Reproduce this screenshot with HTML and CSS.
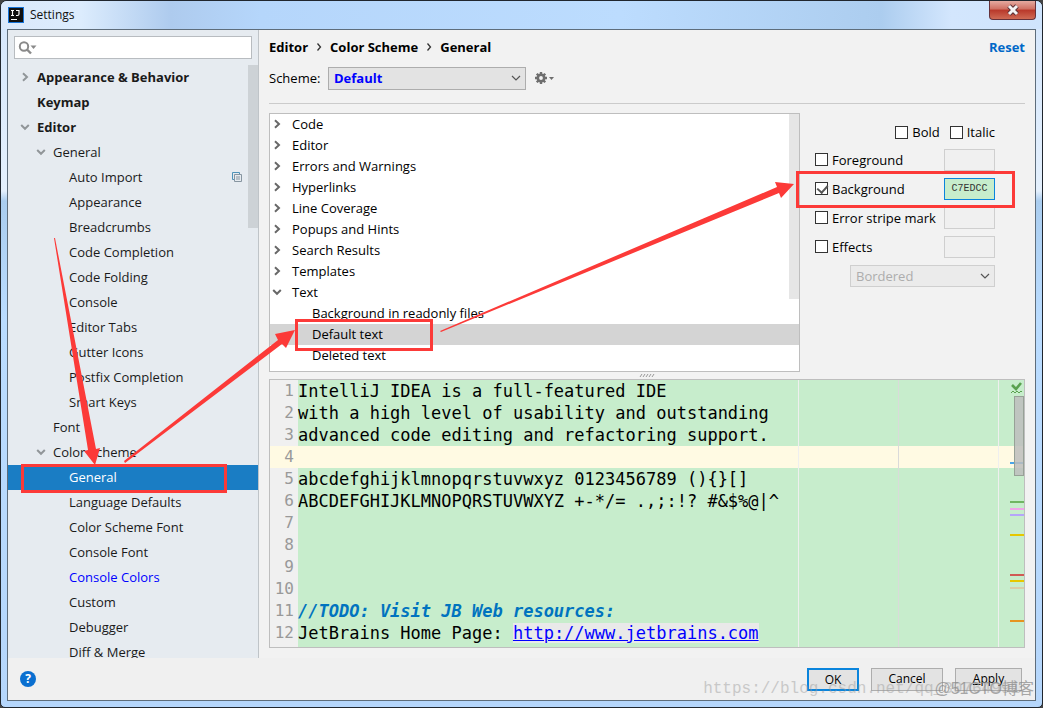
FILE: index.html
```html
<!DOCTYPE html>
<html lang="en">
<head>
<meta charset="utf-8">
<title>Settings</title>
<link rel="stylesheet" href="styles.css">
</head>
<body>
<svg class="defs" width="0" height="0" aria-hidden="true">
  <symbol id="right" viewBox="0 0 10 10"><path d="M3 1.2 7 5 3 8.8" fill="none" stroke="currentColor" stroke-width="2"/></symbol>
  <symbol id="down" viewBox="0 0 10 10"><path d="M1.2 3 5 6.8 8.8 3" fill="none" stroke="currentColor" stroke-width="2"/></symbol>
</svg>
<div class="window">
  <header class="titlebar">
    <svg class="logo" viewBox="0 0 16 16" aria-hidden="true"><rect x=".5" y=".5" width="15" height="15" fill="#111" stroke="#1674d9"/><path d="M3 3.5h3M4.500 3.500v5M3 8.500h3M8 3.500h3v3.500q0 1.500-1.500 1.500H8M3 12.500h6" fill="none" stroke="#fff" stroke-width="1.200"/></svg>
    <h1>Settings</h1>
    <button class="close" aria-label="Close"><svg viewBox="0 0 14 12"><path d="M3 2 11 10M11 2 3 10" stroke="#5b3136" stroke-width="5"/><path d="M3 2 11 10M11 2 3 10" stroke="#f4f4f4" stroke-width="3"/></svg></button>
  </header>
  <div class="client">
    <div class="body">
      <aside class="sidebar">
        <label class="search">
          <svg viewBox="0 0 20 14" aria-hidden="true"><circle cx="6" cy="5.5" r="4.2" fill="none" stroke="#8a8a8a" stroke-width="2"/><path d="m9 8.500 4 4" stroke="#8a8a8a" stroke-width="2.400"/><path d="M12.500 4.500h6l-3 3.500z" fill="#8a8a8a"/></svg>
          <input type="text" aria-label="Search settings">
        </label>
        <nav class="tree">
          <ul>
            <li class="top"><svg class="chev"><use href="#right"/></svg>Appearance &amp; Behavior</li>
            <li class="top"><span class="chev"></span>Keymap</li>
            <li class="top"><svg class="chev"><use href="#down"/></svg>Editor</li>
            <li class="mid"><svg class="chev"><use href="#down"/></svg>General</li>
            <li class="leaf">Auto Import<svg class="copy" viewBox="0 0 10 10"><path d="M2.500 7.500h-2v-7h7v2" fill="none" stroke="#4f93b8"/><path d="M2.500 2.500h7v7h-7zM4 5h4M4 7h4" fill="none" stroke="#8795a0"/></svg></li>
            <li class="leaf">Appearance</li>
            <li class="leaf">Breadcrumbs</li>
            <li class="leaf">Code Completion</li>
            <li class="leaf">Code Folding</li>
            <li class="leaf">Console</li>
            <li class="leaf">Editor Tabs</li>
            <li class="leaf">Gutter Icons</li>
            <li class="leaf">Postfix Completion</li>
            <li class="leaf">Smart Keys</li>
            <li class="mid"><span class="chev"></span>Font</li>
            <li class="mid"><svg class="chev"><use href="#down"/></svg>Color Scheme</li>
            <li class="leaf selected">General</li>
            <li class="leaf">Language Defaults</li>
            <li class="leaf">Color Scheme Font</li>
            <li class="leaf">Console Font</li>
            <li class="leaf changed">Console Colors</li>
            <li class="leaf">Custom</li>
            <li class="leaf">Debugger</li>
            <li class="leaf">Diff &amp; Merge</li>
          </ul>
          <div class="tree-thumb"></div>
        </nav>
      </aside>
      <main class="main">
        <div class="crumbs">
          <span>Editor</span><svg viewBox="0 0 6 10"><path d="m1.500 1.500 3 3.500-3 3.500" fill="none" stroke="#333" stroke-width="1.300"/></svg><span>Color Scheme</span><svg viewBox="0 0 6 10"><path d="m1.500 1.500 3 3.500-3 3.500" fill="none" stroke="#333" stroke-width="1.300"/></svg><span>General</span>
          <a class="reset" href="#">Reset</a>
        </div>
        <div class="scheme">
          <label for="scheme">Scheme:</label>
          <select id="scheme"><option>Default</option></select>
          <button class="gear" aria-label="Scheme actions"><svg viewBox="0 0 20 14"><circle cx="7" cy="7" r="3.200" fill="none" stroke="#6e6e6e" stroke-width="2.600"/><path d="M7 1v2.500M7 10.500V13M1 7h2.500M10.500 7H13M2.760 2.760l1.700 1.700M9.540 9.540l1.700 1.700M2.760 11.240l1.700-1.700M9.540 4.460l1.700-1.700" stroke="#6e6e6e" stroke-width="2.400"/><path d="M15 6h5l-2.500 3z" fill="#6e6e6e"/></svg></button>
        </div>
        <div class="upper">
          <div class="list">
            <ul>
              <li><svg class="chev"><use href="#right"/></svg>Code</li>
              <li><svg class="chev"><use href="#right"/></svg>Editor</li>
              <li><svg class="chev"><use href="#right"/></svg>Errors and Warnings</li>
              <li><svg class="chev"><use href="#right"/></svg>Hyperlinks</li>
              <li><svg class="chev"><use href="#right"/></svg>Line Coverage</li>
              <li><svg class="chev"><use href="#right"/></svg>Popups and Hints</li>
              <li><svg class="chev"><use href="#right"/></svg>Search Results</li>
              <li><svg class="chev"><use href="#right"/></svg>Templates</li>
              <li><svg class="chev"><use href="#down"/></svg>Text</li>
              <li class="child">Background in readonly files</li>
              <li class="child current">Default text</li>
              <li class="child">Deleted text</li>
            </ul>
            <div class="list-thumb"></div>
          </div>
          <form class="options">
            <div class="styles"><label><input type="checkbox">Bold</label><label><input type="checkbox">Italic</label></div>
            <div class="opt"><label><input type="checkbox">Foreground</label><input class="swatch" type="text" aria-label="Foreground color" disabled></div>
            <div class="opt"><label><input type="checkbox" checked>Background</label><input class="swatch on" type="text" aria-label="Background color" value="C7EDCC"></div>
            <div class="opt"><label><input type="checkbox">Error stripe mark</label><input class="swatch" type="text" aria-label="Error stripe color" disabled></div>
            <div class="opt"><label><input type="checkbox">Effects</label><input class="swatch" type="text" aria-label="Effect color" disabled></div>
            <select class="effect" aria-label="Effect type" disabled><option>Bordered</option></select>
          </form>
        </div>
        <div class="splitter"><svg viewBox="0 0 16 5"><path d="m1 4 2-3m1 3 2-3m1 3 2-3m1 3 2-3m1 3 2-3" stroke="#999" stroke-width="1"/></svg></div>
        <section class="editor">
          <ol class="code">
            <li><b>1</b><span>IntelliJ IDEA is a full-featured IDE</span></li>
            <li><b>2</b><span>with a high level of usability and outstanding</span></li>
            <li><b>3</b><span>advanced code editing and refactoring support.</span></li>
            <li class="caret"><b>4</b><span></span></li>
            <li><b>5</b><span>abcdefghijklmnopqrstuvwxyz 0123456789 (){}[]</span></li>
            <li><b>6</b><span>ABCDEFGHIJKLMNOPQRSTUVWXYZ +-*/= .,;:!? #&amp;$%@|^</span></li>
            <li><b>7</b><span></span></li>
            <li><b>8</b><span></span></li>
            <li><b>9</b><span></span></li>
            <li><b>10</b><span></span></li>
            <li><b>11</b><span class="todo">//TODO: Visit JB Web resources:</span></li>
            <li><b>12</b><span>JetBrains Home Page: <a href="#">http://www.jetbrains.com</a></span></li>
          </ol>
          <svg class="stripe" viewBox="0 0 226 267" aria-hidden="true">
            <path d="M.5 0v267M200.500 0v267" stroke="#efefef"/><path d="M100.500 0v267" stroke="#dadada"/>
            <path d="m214 5 4 4 5-6" fill="none" stroke="#59a14f" stroke-width="2.600"/><path d="m213 13 2-2 2 2 2-2 2 2 2-2 1 1" fill="none" stroke="#59a14f"/>
            <g stroke-width="2"><path d="M212 83h14" stroke="#4aa5e8"/><path d="M212 122h14" stroke="#70b562"/><path d="M212 129h14" stroke="#efa5e8"/><path d="M212 135h14" stroke="#b5a5fa"/><path d="M212 155h14" stroke="#e6c700"/><path d="M212 195h14" stroke="#d05a55"/><path d="M212 201h14" stroke="#e6c700"/><path d="M212 208h14" stroke="#d9cda8"/><path d="M212 241h14" stroke="#e69420"/></g>
            <rect x="216.500" y="16.500" width="9" height="79" fill="#bdbdbd" fill-opacity=".85" stroke="#97a197"/>
          </svg>
        </section>
      </main>
    </div>
    <footer class="footer">
      <button class="help" aria-label="Help">?</button>
      <button class="btn primary">OK</button>
      <button class="btn cancel">Cancel</button>
      <button class="btn apply"><u>A</u>pply</button>
    </footer>
  </div>
  <div class="mark url">https://blog.csdn.net/qq_30764991</div>
  <div class="mark site">@51CTO博客</div>
  <svg class="notes" viewBox="0 0 1043 708" aria-hidden="true">
    <g fill="none" stroke="#fc3a38" stroke-width="3"><rect x="22.500" y="465.500" width="203" height="26"/><rect x="296.500" y="320.500" width="135" height="29"/><rect x="797.500" y="172.500" width="216" height="34"/></g>
    <g fill="#fc3a38"><path d="M54 238 88 450l-4 1 11 14 5-17-4 1L55 238z"/><path d="m124 461 154-121-3-6 20-4-9 18-4-4-157 119z"/><path d="m440 331 337-144-2-5 19 2-13 14-2-5-338 139z"/></g>
  </svg>
</div>
</body>
</html>
```
FILE: styles.css
```css
* { box-sizing: border-box; }
body { margin: 0; font: 13px/20px "Open Sans", "Noto Sans", sans-serif; color: #1a1a1a; background: #444; }
ul, ol { margin: 0; padding: 0; list-style: none; }
button, input, select { font: inherit; color: inherit; border-radius: 0; margin: 0; }
.defs { position: absolute; }
.window { position: relative; display: flex; flex-direction: column; height: 100vh; padding: 0 7px 7px; overflow: hidden; border: 1px solid #20262e; border-radius: 7px 7px 5px 5px; background: linear-gradient(#d4e6fc 0, #e4f0fd 190px, #aacdef 200px, #badcff 320px, #b5d6fb); }
.titlebar { display: flex; align-items: center; flex: none; height: 28px; margin: 0 -7px; padding-left: 7px; background: linear-gradient(90deg, #dbe9fb 0, #dcecfd 80px, #aecbee 170px, #b5d6fb 260px, #bcdcfe 620px, #accdef 880px, #d3e6fd 950px, #cfe4fd); }
.titlebar h1 { flex: 1; margin: 0 0 0 6px; font-size: 12px; font-weight: 400; color: #111; }
.logo { width: 16px; height: 16px; }
.close { align-self: flex-start; display: grid; place-items: center; width: 47px; height: 19px; margin-right: 6px; padding: 0; border: 1px solid #65313a; border-top: 0; border-radius: 0 0 4px 4px; background: linear-gradient(#e5aaa0, #cf6f62 45%, #b8382a 50%, #cf6a54); }
.close svg { width: 14px; height: 12px; }
.client { display: flex; flex-direction: column; flex: 1; min-height: 0; border: 1px solid #5e6d7b; margin: 0 -1px -1px; background: #f0f0f0; }
.body { display: flex; flex: 1; min-height: 0; }
.sidebar { display: flex; flex-direction: column; flex: none; width: 251px; padding-top: 6px; border-right: 1px solid #bfc4c8; background: #e6ebf0; }
.search { display: flex; align-items: center; flex: none; height: 23px; margin: 0 6px 6px; padding-left: 3px; background: #fff; border: 1px solid #b8bcc0; }
.search svg { width: 20px; height: 14px; }
.search input { flex: 1; min-width: 0; border: 0; outline: 0; background: none; }
.tree { position: relative; flex: 1; min-height: 0; overflow: hidden; }
.tree li { display: flex; align-items: center; height: 25px; padding-bottom: 2px; white-space: nowrap; }
.tree .chev { color: #919699; margin-right: 7px; }
.chev { flex: none; width: 10px; height: 10px; }
.top { padding-left: 12px; font-weight: 700; }
.mid { padding-left: 28px; }
.leaf { padding-left: 61px; }
.copy { width: 10px; height: 10px; margin: 0 16px 0 auto; }
.tree .selected { background: #1a7dc4; color: #fff; }
.changed { color: #00f; }
.tree-thumb { position: absolute; top: 0; right: 0; width: 10px; height: 163px; background: #cdd2d6; }
.main { display: flex; flex-direction: column; flex: 1; min-width: 0; padding: 7px 10px 10px; background: #f2f2f2; color: #000; }
.crumbs { display: flex; align-items: center; flex: none; height: 20px; font-weight: 700; }
.crumbs svg { width: 6px; height: 10px; margin: 0 8px; }
.reset { margin-left: auto; color: #0068c8; text-decoration: none; }
.scheme { display: flex; align-items: center; flex: none; height: 47px; padding-bottom: 4px; margin-bottom: 9px; border-bottom: 1px solid #cbcbcb; }
.scheme label { width: 59px; }
select { appearance: none; background: #e3e3e3 url("data:image/svg+xml,%3Csvg xmlns='http://www.w3.org/2000/svg' width='10' height='8'%3E%3Cpath d='m1 2 4 4 4-4' fill='none' stroke='%23555' stroke-width='1.2'/%3E%3C/svg%3E") no-repeat right 4px center; border: 1px solid #adadad; }
.scheme select { width: 198px; height: 23px; padding: 0 5px; font-weight: 700; color: #00f; }
.gear { display: flex; margin-left: 8px; padding: 0; border: 0; background: none; }
.gear svg { width: 20px; height: 14px; }
.upper { display: flex; flex: none; height: 259px; }
.list { position: relative; flex: 1; overflow: hidden; border: 1px solid #bebebe; background: #fff; }
.list li { display: flex; align-items: center; height: 21px; padding: 0 0 1px 2px; }
.list .chev { margin-right: 10px; color: #686868; }
.list .child { padding-left: 42px; }
.list .current { background: #d4d4d4; }
.list-thumb { position: absolute; top: 0; right: 0; width: 10px; height: 185px; background: #e6e6e6; }
.options { flex: none; width: 225px; padding: 9px 30px 0 15px; }
.options label { display: flex; align-items: center; gap: 4px; }
.styles { display: flex; justify-content: flex-end; gap: 10px; height: 23px; }
.styles label { height: 20px; }
.opt { display: flex; align-items: center; justify-content: space-between; height: 29px; }
input[type="checkbox"] { appearance: none; position: relative; width: 13px; height: 13px; border: 1px solid #333; background: #fff; }
input[type="checkbox"]:checked::after { content: ""; position: absolute; left: 3px; top: 0; width: 5px; height: 8px; border: solid #555; border-width: 0 2px 2px 0; transform: rotate(42deg); }
.swatch { width: 51px; height: 22px; padding: 0; border: 1px solid #cfcfcf; background: #f0f0f0; text-align: center; font: 10px "Liberation Mono", monospace; color: #333; }
.swatch.on { border-color: #0a84dc; background: #c7edcc; }
.effect { display: block; width: 145px; height: 22px; margin: 4px 0 0 auto; padding: 0 5px; border-color: #cfcfcf; background-color: #ebebeb; color: #adadad; opacity: 1; }
.splitter { display: flex; justify-content: center; align-items: center; flex: none; height: 7px; }
.splitter svg { width: 16px; height: 5px; }
.editor { position: relative; flex: 1; min-height: 0; overflow: hidden; border: 1px solid #bebebe; background: linear-gradient(90deg, #f0f0f0 28px, #c7edcc 28px); }
.code { font: 17px/22px "DejaVu Sans Mono", monospace; }
.code li { display: flex; height: 22px; white-space: pre; }
.code b { width: 28px; padding-right: 4px; text-align: right; font-weight: 400; font-size: 16px; color: #999; }
.caret { background: #fffae3; }
.todo { font-weight: 700; font-style: italic; color: #0073bf; }
.code a { color: #00f; background: #e9e9e9; }
.stripe { position: absolute; top: 0; right: 0; width: 226px; height: 267px; }
.footer { display: flex; align-items: center; flex: none; height: 42px; padding: 0 13px 0 12px; font-size: 12px; }
.help { width: 16px; height: 16px; margin-right: auto; padding: 0; border: 0; border-radius: 50%; background: #0a6fd0; color: #fff; font-weight: 700; line-height: 16px; }
.btn { height: 23px; padding: 0; border: 1px solid #adadad; background: #e3e3e3; color: #000; }
.primary { width: 52px; border: 2px solid #0a84dc; }
.cancel { width: 72px; margin: 0 12px; }
.apply { width: 67px; }
.mark { position: absolute; pointer-events: none; white-space: nowrap; }
.url { right: 22px; bottom: 6px; font: 16px/24px "Liberation Mono", monospace; color: #999; opacity: .45; }
.site { right: 8px; bottom: 7px; font: 16px/22px "Liberation Sans", "Noto Sans CJK SC", sans-serif; color: #888; opacity: .7; }
.notes { position: absolute; left: -1px; top: -1px; width: 1043px; height: 708px; pointer-events: none; }
```
